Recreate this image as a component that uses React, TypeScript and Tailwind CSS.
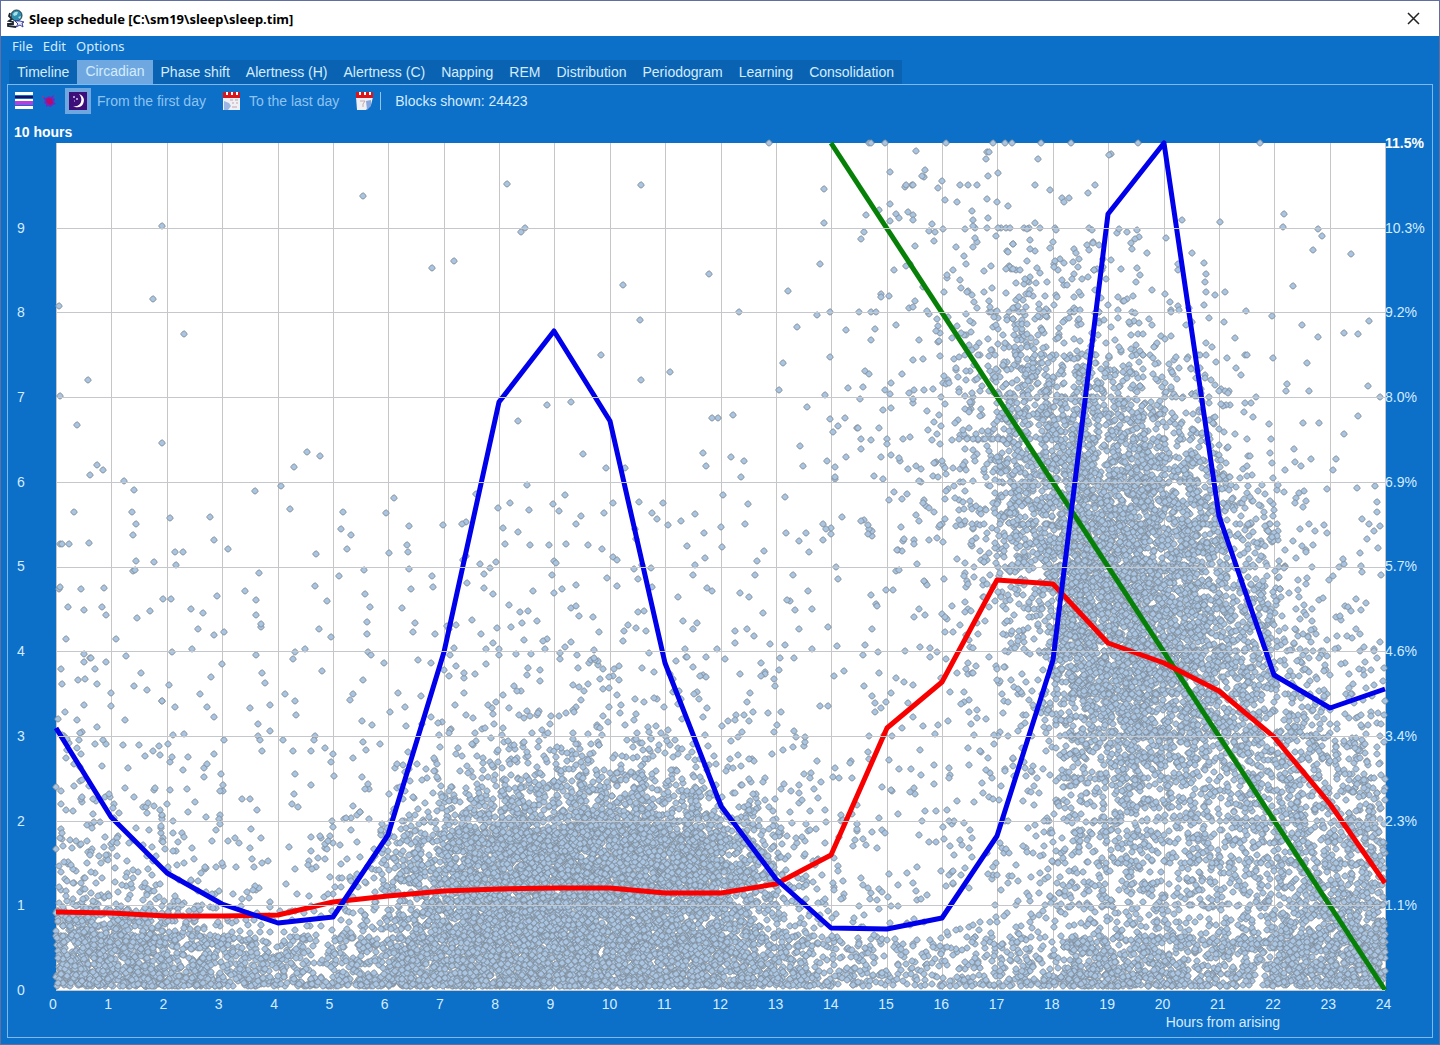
import { useMemo } from 'react';
import clsx from 'clsx';

const menus = ['File', 'Edit', 'Options'];

const tabs = [
  'Timeline',
  'Circadian',
  'Phase shift',
  'Alertness (H)',
  'Alertness (C)',
  'Napping',
  'REM',
  'Distribution',
  'Periodogram',
  'Learning',
  'Consolidation',
];

const hourLabels = Array.from({ length: 25 }, (_, i) => i);
const lengthLabels = ['', '9', '8', '7', '6', '5', '4', '3', '2', '1', '0'];
const percentLabels = ['11.5%', '10.3%', '9.2%', '8.0%', '6.9%', '5.7%', '4.6%', '3.4%', '2.3%', '1.1%', ''];

const PLOT_W = 1329;
const PLOT_H = 847;
const COL_W = PLOT_W / 24;
const ROW_H = PLOT_H / 20;

// curve heights at each full hour, measured from the top of the plot
const circadian = [
  585, 674, 730, 761, 780, 774, 692, 509, 259, 188, 278, 520, 663, 736, 785, 786, 775, 693, 517, 71, 0, 373, 532, 565, 546,
];
const sleepLength = [
  769, 770, 773, 773, 772, 759, 753, 748, 746, 745, 745, 750, 750, 741, 712, 585, 539, 437, 441, 500, 520, 548, 594, 661, 740,
];

// sleep blocks per hour (columns) and half hour of length (rows, longest first)
const density = [
  [0, 0, 0, 0, 0, 0, 0, 0, 0, 0, 0, 0, 0, 0, 0, 3, 0, 0, 0, 0, 0, 0, 0, 0],
  [0, 0, 0, 0, 0, 0, 0, 0, 0, 0, 0, 0, 0, 0, 2, 8, 2, 0, 0, 0, 0, 0, 0, 0],
  [0, 0, 0, 0, 0, 0, 0, 0, 0, 0, 0, 0, 0, 0, 2, 6, 10, 22, 18, 8, 3, 0, 0, 0],
  [0, 0, 0, 0, 0, 0, 0, 0, 0, 0, 0, 0, 0, 0, 5, 7, 16, 30, 24, 12, 7, 1, 0, 0],
  [0, 0, 0, 0, 0, 0, 0, 0, 0, 0, 0, 0, 0, 1, 3, 8, 28, 62, 36, 24, 11, 3, 1, 0],
  [0, 0, 0, 0, 0, 0, 0, 0, 0, 0, 0, 0, 0, 2, 5, 9, 32, 95, 80, 55, 28, 7, 2, 1],
  [0, 0, 0, 0, 0, 0, 0, 0, 1, 0, 0, 0, 0, 2, 7, 11, 34, 110, 125, 100, 48, 10, 3, 3],
  [0, 0, 0, 0, 0, 0, 0, 0, 1, 2, 1, 2, 3, 3, 6, 11, 38, 110, 160, 150, 85, 18, 5, 3],
  [2, 2, 2, 1, 2, 1, 3, 3, 4, 3, 3, 4, 3, 3, 7, 12, 36, 115, 195, 200, 130, 38, 11, 5],
  [4, 3, 3, 2, 2, 3, 3, 5, 4, 5, 4, 4, 4, 4, 7, 11, 20, 105, 235, 240, 170, 50, 14, 6],
  [5, 3, 4, 3, 2, 2, 3, 6, 6, 7, 5, 5, 3, 4, 4, 7, 13, 55, 255, 255, 190, 75, 20, 8],
  [6, 3, 4, 4, 3, 3, 4, 8, 8, 9, 7, 6, 5, 5, 5, 7, 14, 36, 240, 255, 190, 95, 30, 13],
  [7, 5, 4, 3, 3, 4, 5, 9, 11, 12, 11, 9, 7, 5, 5, 6, 11, 25, 190, 240, 185, 105, 45, 20],
  [12, 6, 5, 4, 4, 5, 7, 12, 16, 19, 17, 13, 9, 7, 6, 6, 10, 20, 125, 190, 150, 100, 55, 30],
  [12, 8, 6, 4, 5, 7, 11, 26, 38, 40, 37, 24, 13, 9, 7, 7, 9, 17, 70, 120, 115, 95, 75, 50],
  [20, 14, 9, 6, 6, 12, 26, 65, 105, 120, 112, 80, 32, 12, 9, 8, 10, 16, 55, 85, 80, 80, 85, 78],
  [34, 22, 16, 9, 9, 18, 80, 215, 290, 330, 320, 260, 115, 22, 10, 9, 11, 18, 55, 72, 68, 72, 95, 105],
  [38, 30, 20, 10, 11, 28, 125, 260, 320, 350, 340, 290, 140, 32, 11, 9, 12, 20, 55, 66, 60, 66, 95, 115],
  [160, 135, 65, 30, 22, 34, 125, 240, 280, 300, 280, 230, 120, 40, 13, 11, 14, 22, 45, 50, 42, 60, 120, 190],
  [320, 290, 210, 155, 120, 160, 280, 340, 350, 360, 350, 330, 230, 140, 80, 70, 75, 105, 200, 215, 160, 135, 215, 330],
];

// isolated long blocks, as x and y inside the plot
const outliers = [
  [713, 0], [813, 0], [815, 0], [829, 0], [890, 0], [937, 0], [949, 0], [956, 0], [985, 0], [1015, 0], [1082, 0], [1204, 0],
  [451, 41], [585, 42], [307, 53], [106, 83], [469, 85], [465, 89], [376, 125], [398, 118], [653, 131], [567, 142],
  [3, 163], [97, 156], [128, 191], [584, 177], [545, 212], [614, 229], [585, 237], [32, 237], [4, 253], [21, 282],
  [106, 300], [491, 262], [515, 259], [677, 272], [662, 275], [656, 275], [41, 322], [47, 327], [68, 338], [251, 309],
  [264, 313], [238, 324], [768, 46], [768, 80], [764, 121], [732, 148], [683, 169], [774, 169], [741, 184],
  [834, 29], [849, 44], [856, 42], [868, 34], [886, 38], [834, 61], [857, 72], [834, 78],
  [931, 9], [930, 16], [933, 9], [1055, 11], [1053, 12], [982, 16], [942, 30], [932, 33], [904, 42], [912, 42], [921, 42],
  [979, 42], [994, 47], [1039, 42], [1032, 50], [931, 56], [941, 59], [952, 63], [1006, 55], [1013, 55], [1008, 59],
  [916, 68], [932, 75], [919, 85], [931, 85], [945, 85], [950, 85], [954, 85], [968, 85], [973, 85], [984, 85], [999, 85],
  [1033, 85], [1126, 77], [1164, 79], [1081, 87], [1071, 89], [1110, 95], [1148, 120], [1149, 139], [1159, 152],
  [1228, 71], [1227, 84], [1262, 86], [1266, 93], [1257, 107], [1295, 111], [1237, 143], [1313, 178], [1288, 190],
  [1302, 191], [1262, 194], [1216, 173], [1171, 215], [1217, 215], [1156, 204], [1230, 248],
];

function createRandom(seed: number) {
  let state = seed;
  return () => {
    state = (state * 1664525 + 1013904223) % 4294967296;
    return state / 4294967296;
  };
}

function buildBlocks() {
  const random = createRandom(24423);
  const points: number[][] = [];

  density.forEach((row, r) => {
    row.forEach((count, c) => {
      for (let i = 0; i < count; i++) {
        // two random terms let neighbouring cells blend into each other
        let x = (c + 0.5 + (random() + random() - 1) * 0.8) * COL_W;
        let y = (r + 0.5 + (random() + random() - 1) * 0.8) * ROW_H;
        if (c > 13 && random() < 0.07) {
          y = Math.round(y / ROW_H) * ROW_H;
        }
        if (x < 0) x = -x;
        if (x > PLOT_W) x = 2 * PLOT_W - x;
        // the shortest blocks crowd towards the axis
        if (r === 19) y = (r + 0.91 - Math.pow(random(), 1.5) * 1.2) * ROW_H;
        if (y > PLOT_H - 3) y = PLOT_H - 3 - random() * 12;
        points.push([Math.round(x), Math.round(Math.abs(y))]);
      }
    });
  });

  // shuffle, so that no cell lies as a whole above its neighbour
  for (let i = points.length - 1; i > 0; i--) {
    const j = Math.floor(random() * (i + 1));
    [points[i], points[j]] = [points[j], points[i]];
  }

  return 'M' + [...outliers, ...points].map((p) => p.join(' ')).join('L');
}

const toPoints = (heights: number[]) => heights.map((y, i) => `${Math.round(i * COL_W)},${y}`).join(' ');

function AppIcon() {
  return (
    <svg width="18" height="20" viewBox="0 0 18 20" aria-hidden="true">
      <path d="M3 4l-1 3 3 3-3 2 4 1v2H1v2l8 1" fill="none" stroke="#1c2530" strokeWidth="1.800" />
      <circle cx="9.500" cy="6.500" r="5.500" fill="#2f8fb0" stroke="#27313c" />
      <path d="M6 5q2-3 5-2l-1 3-3 1zM11 8l3-1-1 3z" fill="#a9e3e8" />
      <path d="M8 12l3 3-2 3 4-2 3 2-1-4 2-1-4-1z" fill="#e8ecff" stroke="#3b3f9a" />
    </svg>
  );
}

function LinesIcon() {
  return (
    <svg width="18" height="18" viewBox="0 0 18 18" shapeRendering="crispEdges" aria-hidden="true">
      <path d="M0 0h18v3H0zM0 7h18v2H0zM0 14h18v3H0z" fill="#fff" />
      <path d="M0 4h18v2H0z" fill="#15106a" />
      <path d="M0 9h18v4H0z" fill="#b43fe0" />
    </svg>
  );
}

function SplashIcon() {
  return (
    <svg width="16" height="16" viewBox="0 0 16 16" aria-hidden="true">
      <path d="M2 4l3 1 3-2 2 1 3-2-1 3 2 1-1 3 2 2-3 1-2 2-3-1-2 1 0-3-2-1 1-2z" fill="#6a2cc0" />
      <path d="M5 6l3-1 3 1 1 4-3 2-3-2z" fill="#b8086a" />
      <path d="M1 4h2M14 3h1M2 9h1" stroke="#c2267a" />
    </svg>
  );
}

function MoonIcon() {
  return (
    <svg width="18" height="18" viewBox="0 0 18 18" aria-hidden="true">
      <path d="M0 0h18v18H0z" fill="#3d0f78" />
      <path d="M10 2c5 2 6 6 4 10-2 4-7 4-10 2 4 1 7-1 8-4 1-3 0-6-2-8z" fill="#fff" />
      <path d="M4 5h2M5 4v2M7 7h2M8 6v2M5 9h1" stroke="#d9c8f5" />
    </svg>
  );
}

function CalendarIcon({ last }: { last?: boolean }) {
  return (
    <svg width="19" height="20" viewBox="0 0 19 20" aria-hidden="true">
      <path d={last ? 'M1 6h17l-2 8-5 5H2z' : 'M1 6h17v13H1z'} fill="#eef0f6" />
      <path d="M1 1h17v6H1z" fill="#d8161c" />
      <path d="M4 1h2v3H4zM9 1h2v3H9zM14 1h2v3h-2z" fill="#fff" />
      {last ? (
        <>
          <path d="M5 10h5l-2 3v3" fill="none" stroke="#c9a8a4" />
          <path d="M11 10l5-1v6l-4 4z" fill="#86a5dc" />
        </>
      ) : (
        <>
          <path d="M2 10l5 2 2 3-3 4H2z" fill="#9db5e2" />
          <path d="M8 9h3M13 9h3M10 12h2M14 12h2M10 16h5" stroke="#c4a4aa" />
        </>
      )}
    </svg>
  );
}

function SleepChart() {
  const blocks = useMemo(buildBlocks, []);

  return (
    <svg
      viewBox={`0 0 ${PLOT_W} ${PLOT_H}`}
      className="block h-auto w-full overflow-visible bg-white"
      role="img"
      aria-label="Sleep blocks by hours from arising"
    >
      <defs>
        <marker id="block" markerUnits="userSpaceOnUse" markerWidth="9" markerHeight="9" viewBox="-4.500 -4.500 9 9">
          <path d="M-.6-3H.6L3-.6V.6L.6 3H-.6L-3 .6V-.6Z" fill="#a9c5e2" stroke="#7f8c99" />
        </marker>
      </defs>

      {hourLabels.map((h) => (
        <path key={h} d={`M${Math.round(h * COL_W)} 0V${PLOT_H}`} stroke="#c6c6c6" shapeRendering="crispEdges" />
      ))}

      <path d={blocks} fill="none" stroke="none" markerStart="url(#block)" markerMid="url(#block)" markerEnd="url(#block)" />

      <g fill="none" strokeWidth="5" strokeLinejoin="round">
        <path d={`M775 0L${PLOT_W} ${PLOT_H}`} stroke="#078007" />
        <polyline points={toPoints(sleepLength)} stroke="#f80000" />
        <polyline points={toPoints(circadian)} stroke="#0000ea" />
      </g>

      {lengthLabels.slice(1).map((label, i) => (
        <path
          key={label}
          d={`M0 ${Math.round((i + 1) * ROW_H * 2)}H${PLOT_W}`}
          stroke="#c4c8cc"
          shapeRendering="crispEdges"
        />
      ))}
    </svg>
  );
}

export default function App() {
  return (
    <div className="min-h-screen border border-[#5f6fa3] bg-[#0c6fc8] font-['Liberation_Sans',sans-serif] text-sm leading-4 text-[#d4ecff]">
      <header className="flex h-[35px] items-center justify-between bg-white pr-[19px] pl-1.5">
        <div className="flex items-center gap-1">
          <AppIcon />
          <h1 className="font-['Noto_Sans',sans-serif] text-[13px] font-bold text-black">
            Sleep schedule [C:\sm19\sleep\sleep.tim]
          </h1>
        </div>
        <button aria-label="Close" className="text-black">
          <svg width="13" height="13" viewBox="0 0 13 13">
            <path d="M1 1l11 11M12 1L1 12" stroke="#222" strokeWidth="1.500" />
          </svg>
        </button>
      </header>

      <nav className="flex h-6 items-center gap-2.5 pb-1 pl-[11px] font-['Noto_Sans',sans-serif] text-[13px]">
        {menus.map((menu) => (
          <button key={menu}>{menu}</button>
        ))}
      </nav>

      <div className="px-1.5 pb-1.5">
        <div role="tablist" className="ml-0.5 flex h-6 w-fit bg-[#0a63b2]">
          {tabs.map((tab) => (
            <button
              key={tab}
              role="tab"
              aria-selected={tab === 'Circadian'}
              className={clsx('px-2', tab === 'Circadian' && 'bg-[#6fa8e0] pb-0.5')}
            >
              {tab}
            </button>
          ))}
        </div>

        <main className="border border-[#7db8ee] pb-[7px]">
          <div className="flex h-8 items-center pl-[7px] text-[#8fc4f2]">
            <button aria-label="Lines" className="mr-2">
              <LinesIcon />
            </button>
            <button aria-label="Phases" className="mr-2">
              <SplashIcon />
            </button>
            <button aria-label="Night" className="mr-1.5 bg-[#6fa8e0] p-1">
              <MoonIcon />
            </button>
            <span>From the first day</span>
            <button aria-label="Pick first day" className="mr-2 ml-4">
              <CalendarIcon />
            </button>
            <span>To the last day</span>
            <button aria-label="Pick last day" className="mr-1.5 ml-4">
              <CalendarIcon last />
            </button>
            <span className="mr-3.5 h-[18px] w-px bg-[#8fc4f2]" />
            <span className="text-[#d4ecff]">Blocks shown: 24423</span>
          </div>

          <div className="flex h-[26px] items-end pb-[3px] pl-1.5 font-bold text-white">10 hours</div>

          <div className="flex">
            <div className="-my-2 flex w-12 flex-col justify-between pl-[9px]">
              {lengthLabels.map((label) => (
                <span key={label} className="h-4">
                  {label}
                </span>
              ))}
            </div>
            <div className="min-w-0 flex-1">
              <SleepChart />
            </div>
            <div className="-my-2 flex w-[47px] flex-col justify-between">
              {percentLabels.map((label, i) => (
                <span key={label} className={clsx('h-4', i === 0 && 'font-bold text-white')}>
                  {label}
                </span>
              ))}
            </div>
          </div>

          <div className="mt-1.5 mr-10 ml-[41px] flex justify-between">
            {hourLabels.map((h) => (
              <span key={h} className="w-4">
                {h}
              </span>
            ))}
          </div>
          <div className="mt-0.5 pr-[152px] text-right">Hours from arising</div>
        </main>
      </div>
    </div>
  );
}
